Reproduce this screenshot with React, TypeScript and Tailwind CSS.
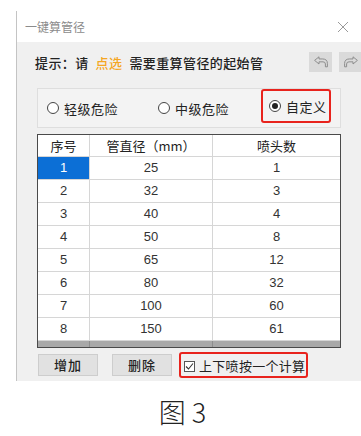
import React from "react";

const F = { fontFamily: '"Noto Sans CJK SC", "Noto Sans", sans-serif' };

function Arrow({ flip }: { flip?: boolean }) {
  return (
    <div className="w-[23px] h-[20px] bg-[#dadada] flex items-center justify-center">
      <svg width="16" height="14" viewBox="0 0 20 16" style={flip ? { transform: "scaleX(-1)" } : undefined}>
        <path
          d="M2 6 L7.5 1.5 L7.5 4.2 L12 4.2 Q18 4.2 18 10 L18 14 L15.5 14 L15.5 10.5 Q15.5 7.8 12.5 7.8 L7.5 7.8 L7.5 10.5 Z"
          fill="none"
          stroke="#8a8a8a"
          strokeWidth="1.2"
          strokeLinejoin="round"
        />
      </svg>
    </div>
  );
}

function Radio({ checked, label }: { checked?: boolean; label: string }) {
  return (
    <div className="flex items-center gap-[5px] whitespace-nowrap">
      <div className="w-[12px] h-[12px] shrink-0 rounded-full border border-[#444] bg-white flex items-center justify-center">
        {checked && <div className="w-[6px] h-[6px] rounded-full bg-[#222]" />}
      </div>
      <span className="text-[13px] text-[#222] tracking-[0.5px] leading-none">{label}</span>
    </div>
  );
}

const rows = [
  ["1", "25", "1"],
  ["2", "32", "3"],
  ["3", "40", "4"],
  ["4", "50", "8"],
  ["5", "65", "12"],
  ["6", "80", "32"],
  ["7", "100", "60"],
  ["8", "150", "61"],
];

export default function App() {
  return (
    <div className="w-[361px] h-[436px] bg-white overflow-hidden" style={F}>
      <div className="ml-[16px] mt-[11px] w-[345px] h-[370px] border-l border-[#c4c4c4] flex flex-col">
        <div className="h-[31px] bg-white flex items-center justify-between pl-[8px] pr-[12px]">
          <span className="text-[12px] text-[#8c8c8c] leading-none">一键算管径</span>
          <svg width="12" height="12" viewBox="0 0 12 12">
            <path d="M1 1 L11 11 M11 1 L1 11" stroke="#9a9a9a" strokeWidth="1" />
          </svg>
        </div>
        <div className="flex-1 bg-[#f0f0f0] pl-[20px] pr-[3px] flex flex-col">
          <div className="mt-[10px] h-[20px] flex items-center justify-between -ml-[2px]">
            <div className="text-[13px] text-[#222] font-medium tracking-[0.4px] leading-none flex items-center">
              <span>提示：请</span>
              <span className="ml-[7px] text-[#f5a623]">点选</span>
              <span className="ml-[7px]">需要重算管径的起始管</span>
            </div>
            <div className="flex items-center gap-[7px] mr-[-4px]">
              <Arrow />
              <Arrow flip />
            </div>
          </div>
          <div className="mt-[16px] w-[304px] h-[40px] border border-[#dedede] bg-[#f3f3f3] flex items-center pl-[9px]">
            <Radio label="轻级危险" />
            <div className="ml-[40px]">
              <Radio label="中级危险" />
            </div>
            <div className="ml-[32px] h-[34px] w-[70px] shrink-0 border-2 border-[#e8231d] rounded-[3px] flex items-center pl-[6px] -mt-[4px]">
              <Radio checked label="自定义" />
            </div>
          </div>
          <div className="mt-[6px] w-[304px] border border-[#4a4a4a] bg-white flex flex-col">
            <div className="flex h-[22px] border-b border-[#d6d6d6] text-[13px] text-[#222]">
              <div className="w-[52px] border-r border-[#d6d6d6] flex items-center justify-center">序号</div>
              <div className="w-[123px] border-r border-[#d6d6d6] flex items-center justify-center">管直径（mm）</div>
              <div className="flex-1 flex items-center justify-center">喷头数</div>
            </div>
            {rows.map((r, i) => (
              <div
                key={i}
                className="flex h-[23px] border-b border-[#d6d6d6] text-[13px] text-[#333]"
                style={{ fontFamily: '"Liberation Sans", sans-serif' }}
              >
                <div
                  className={
                    i === 0
                      ? "w-[52px] border-r border-[#d6d6d6] flex items-center justify-center bg-[#0c6fd6] text-white"
                      : "w-[52px] border-r border-[#d6d6d6] flex items-center justify-center"
                  }
                >
                  {r[0]}
                </div>
                <div className="w-[123px] border-r border-[#d6d6d6] flex items-center justify-center">{r[1]}</div>
                <div className="flex-1 flex items-center justify-center">{r[2]}</div>
              </div>
            ))}
            <div className="flex h-[6px] bg-[#a9a9a9]">
              <div className="w-[52px] border-r border-[#8e8e8e]" />
              <div className="w-[123px] border-r border-[#8e8e8e]" />
              <div className="flex-1" />
            </div>
          </div>
          <div className="mt-[4px] flex items-center">
            <div className="ml-[1px] w-[60px] h-[22px] bg-[#e1e1e1] border border-[#cdcdcd] flex items-center justify-center text-[13px] text-[#222] font-medium tracking-[1px]">
              增加
            </div>
            <div className="ml-[14px] w-[60px] h-[22px] bg-[#e1e1e1] border border-[#cdcdcd] flex items-center justify-center text-[13px] text-[#222] font-medium tracking-[1px]">
              删除
            </div>
            <div className="ml-[7px] w-[129px] h-[26px] border-2 border-[#e8231d] rounded-[3px] flex items-center pl-[3px]">
              <div className="w-[11px] h-[11px] border border-[#555] bg-white flex items-center justify-center mt-[3px]">
                <svg width="9" height="9" viewBox="0 0 9 9">
                  <path d="M1 4.5 L3.5 7 L8 1.5" fill="none" stroke="#333" strokeWidth="1.1" />
                </svg>
              </div>
              <span className="ml-[4px] text-[13px] text-[#222] tracking-[0.3px] leading-none whitespace-nowrap">上下喷按一个计算</span>
            </div>
          </div>
        </div>
      </div>
      <div className="flex justify-center pt-[17px] pl-[4px]">
        <span className="text-[27px] font-light text-[#222] leading-none whitespace-pre">图 3</span>
      </div>
    </div>
  );
}
